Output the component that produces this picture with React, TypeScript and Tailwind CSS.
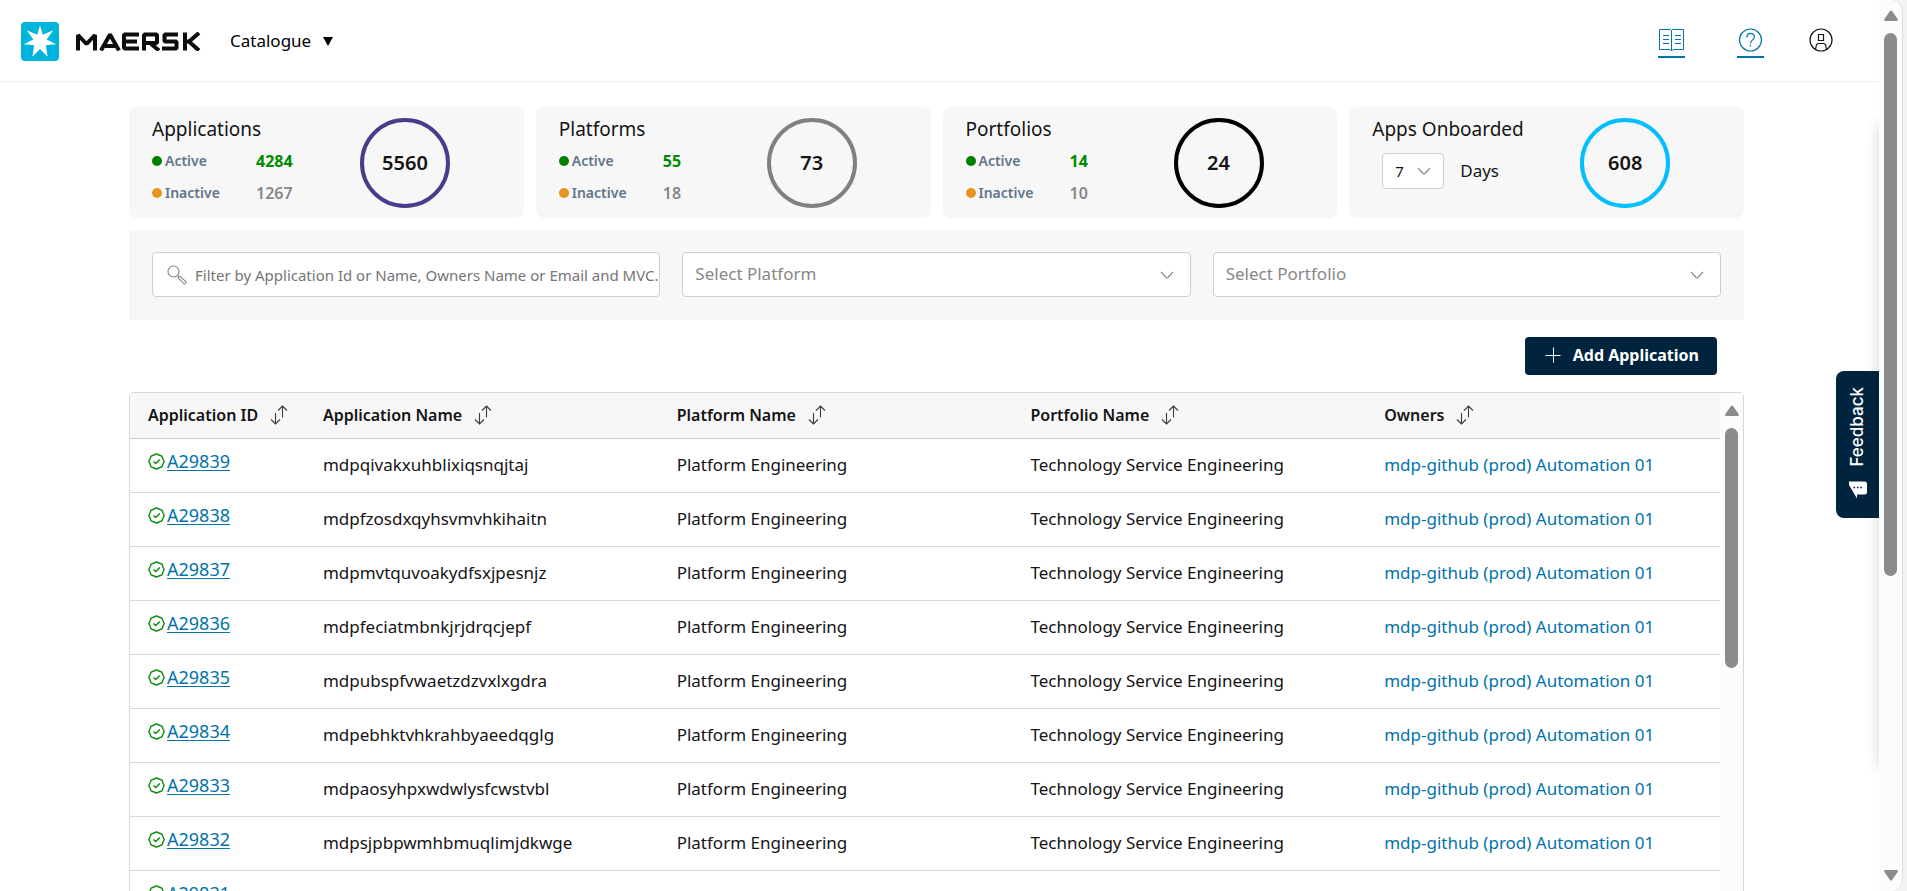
import React from 'react';

interface StatCardProps {
  title: string;
  total: number;
  ring: string;
  active: number;
  inactive: number;
}

interface AppRow {
  id: string;
  name: string;
}

const STATS: StatCardProps[] = [
  { title: 'Applications', total: 5560, ring: 'border-[#483d8b]', active: 4284, inactive: 1267 },
  { title: 'Platforms', total: 73, ring: 'border-[#808080]', active: 55, inactive: 18 },
  { title: 'Portfolios', total: 24, ring: 'border-black', active: 14, inactive: 10 },
];

const ROWS: AppRow[] = [
  { id: 'A29839', name: 'mdpqivakxuhblixiqsnqjtaj' },
  { id: 'A29838', name: 'mdpfzosdxqyhsvmvhkihaitn' },
  { id: 'A29837', name: 'mdpmvtquvoakydfsxjpesnjz' },
  { id: 'A29836', name: 'mdpfeciatmbnkjrjdrqcjepf' },
  { id: 'A29835', name: 'mdpubspfvwaetzdzvxlxgdra' },
  { id: 'A29834', name: 'mdpebhktvhkrahbyaeedqglg' },
  { id: 'A29833', name: 'mdpaosyhpxwdwlysfcwstvbl' },
  { id: 'A29832', name: 'mdpsjpbpwmhbmuqlimjdkwge' },
  { id: 'A29831', name: 'mdpxvukidtkxsrntevwdvuil' },
];

const COLUMNS = ['Application ID', 'Application Name', 'Platform Name', 'Portfolio Name', 'Owners'];

const Logo = () => (
  <a href="#" aria-label="Home" className="mt-0.5 flex items-center gap-4">
    <svg className="h-[39px] w-[38px] shrink-0" viewBox="0 0 38 39">
      <rect width="38" height="39" rx="4" fill="#00b5dd" />
      <path
        fill="#fff"
        d="M19 3.500L21.800 12.800L32.300 8.200L25.600 17.400L35.200 22.200L24.800 23.300L26.600 34.800L19 27L11.400 34.800L13.200 23.300L2.800 22.200L12.400 17.400L5.700 8.200L16.200 12.800Z"
      />
    </svg>
    <svg className="h-[19px] w-[126px] shrink-0" viewBox="0 0 126 19" role="img" aria-label="MAERSK">
      <g fill="none" stroke="#0d0d0d" strokeWidth="4" strokeLinejoin="bevel">
        <path d="M3 18.500V3L11.500 12L20 3V18.500" />
        <path d="M26 18.500L35 2.500L44 18.500M30 14H40" />
        <path d="M64 2.500H49V16.500H64M49 9.500H62" />
        <path d="M69 18.500V2.500H82V11H69M75 11L84 18.500" />
        <path d="M103 2.500H89.500V9.500H101.500V16.500H87" />
        <path d="M110 0.500V18.500M110 9.500H114L124 1M114 9.500L124 18.500" />
      </g>
    </svg>
  </a>
);

const BookIcon = () => (
  <svg className="h-6 w-[27px]" viewBox="0 0 27 24" fill="none" stroke="#0073ab" strokeWidth="1">
    <path d="M1.500 1.500H12.500L13.500 2.500L14.500 1.500H25.500V21.500H15L13.500 23L12 21.500H1.500ZM13.500 2.500V22.500" />
    <path d="M5 7.500H11M5 11.500H11M5 15.500H11M17 7.500H23M17 11.500H23M17 15.500H23" />
  </svg>
);

const HelpIcon = () => (
  <svg className="h-6 w-[27px]" viewBox="0 0 27 24" fill="none" stroke="#0073ab" strokeWidth="1.200">
    <circle cx="13.500" cy="12" r="11" />
    <path d="M9.800 9.500C9.800 3.800 17.400 4.300 17.400 8.800C17.400 12 13.500 11.800 13.500 15.500M13.500 17V18.500" />
  </svg>
);

const UserIcon = () => (
  <svg className="h-6 w-6" viewBox="0 0 24 24" fill="none" stroke="#141414" strokeWidth="1.200">
    <circle cx="12" cy="12" r="11" />
    <path d="M9.500 6.500H14.500V12.500H9.500ZM6.500 21.500L7.500 16.500L9 15.500H15L16.500 16.500L17.500 21.500" />
  </svg>
);

const SortIcon = () => (
  <svg className="h-5 w-[18px]" viewBox="0 0 18 20" fill="none" stroke="#3c3c3c" strokeWidth="1.100">
    <path d="M5.500 8V19M1 14.500L5.500 19L10 14.500M12.500 12.500V1M8 5.500L12.500 1L17 5.500" />
  </svg>
);

const VerifiedIcon = () => (
  <svg className="h-[17px] w-[17px] shrink-0" viewBox="0 0 17 17" fill="none" stroke="#088a08" strokeWidth="1.400">
    <path
      strokeLinejoin="round"
      d="M8.500 0.800L11 2L13.900 3.100L15 6L16.200 8.500L15 11L13.900 13.900L11 15L8.500 16.200L6 15L3.100 13.900L2 11L0.800 8.500L2 6L3.100 3.100L6 2Z"
    />
    <path d="M5.500 8.500L7.700 10.500L11.800 6.500" />
  </svg>
);

const SearchIcon = () => (
  <svg className="h-5 w-5 shrink-0" viewBox="0 0 20 20" fill="none" stroke="#878787" strokeWidth="1.100">
    <circle cx="6.500" cy="6.500" r="5.500" />
    <path d="M10.400 10.400L12 12M11.500 13.200C10.800 12.400 12.500 10.700 13.400 11.400L18.700 16.700C19.600 17.900 18 19.500 16.800 18.700Z" />
  </svg>
);

const ChevronDown = () => (
  <svg className="pointer-events-none h-2 w-3.5 shrink-0" viewBox="0 0 14 8" fill="none" stroke="#878787" strokeWidth="1.200">
    <path d="M1 0.800L6 6.500Q7 7.200 8 6.500L13 0.800" />
  </svg>
);

const ScrollArrow = ({ down = false }: { down?: boolean }) => (
  <svg className={down ? 'h-3 w-3.5 rotate-180' : 'h-3 w-3.5'} viewBox="0 0 14 12" fill="#8b8b8b">
    <path d="M7 0.500Q7.600 0.500 8 1L13.600 9Q14.200 11 13 11H1Q-0.200 11 0.400 9L6 1Q6.400 0.500 7 0.500Z" />
  </svg>
);

const Ring = ({ value, ring }: { value: number; ring: string }) => (
  <div className={`flex h-[90px] w-[90px] items-center justify-center rounded-full border-4 text-xl font-semibold ${ring}`}>
    {value}
  </div>
);

const StatCard: React.FC<StatCardProps> = ({ title, total, ring, active, inactive }) => (
  <section className="flex h-[111px] rounded-lg bg-[#f7f7f7] pl-[23px] pt-[11px]">
    <div className="w-[208px]">
      <h2 className="text-[19px] leading-[22px]">{title}</h2>
      <dl className="mt-[5px] grid grid-cols-[104px_1fr] leading-8">
        <dt className="flex items-center gap-[3px] text-sm font-semibold text-[#62748a]">
          <span className="h-2.5 w-2.5 rounded-full bg-[#008000]" />
          Active
        </dt>
        <dd className="text-base font-bold leading-8 text-[#008a00]">{active}</dd>
        <dt className="flex items-center gap-[3px] text-sm font-semibold text-[#62748a]">
          <span className="h-2.5 w-2.5 rounded-full bg-[#e99323]" />
          Inactive
        </dt>
        <dd className="text-base font-semibold leading-8 text-[#878787]">{inactive}</dd>
      </dl>
    </div>
    <Ring value={total} ring={ring} />
  </section>
);

const FilterSelect = ({ label }: { label: string }) => (
  <div className="relative flex h-[45px] items-center rounded border border-[#cfcfcf] bg-white pr-4">
    <select aria-label={label} className="h-full w-full appearance-none bg-transparent pb-0.5 pl-3 text-[17px] text-[#878787]">
      <option>{label}</option>
    </select>
    <ChevronDown />
  </div>
);

export default function App() {
  return (
    <div className="flex h-screen overflow-hidden bg-[#f3f3f3] pr-1 font-['Noto_Sans',sans-serif] text-[#141414]">
      <div className="relative min-w-0 flex-1 overflow-hidden bg-white">
        <header className="flex h-[82px] items-center border-b border-[#ededed] pl-[21px] pr-[46px]">
          <Logo />
          <button className="ml-[29px] flex items-center gap-3 text-[17px] text-black">
            Catalogue
            <svg className="mt-0.5 h-[9px] w-2.5" viewBox="0 0 10 9">
              <path d="M0 0H10L5 9Z" />
            </svg>
          </button>
          <nav className="ml-auto flex items-center">
            <a href="#docs" aria-label="Documentation" className="mt-1 border-b-2 border-[#0073ab] pb-1">
              <BookIcon />
            </a>
            <a href="#help" aria-label="Help" className="ml-[52px] mt-1 border-b-2 border-[#0073ab] pb-1">
              <HelpIcon />
            </a>
            <button aria-label="Account" className="mb-0.5 ml-[45px]">
              <UserIcon />
            </button>
          </nav>
        </header>

        <main className="pl-[129px] pr-[135px] pt-[25px]">
          <div className="grid grid-cols-4 gap-3">
            {STATS.map((stat) => (
              <StatCard key={stat.title} {...stat} />
            ))}
            <section className="flex h-[111px] rounded-lg bg-[#f7f7f7] pl-[23px] pt-[11px]">
              <div className="w-[208px]">
                <h2 className="text-[19px] leading-[22px]">Apps Onboarded</h2>
                <div className="mt-[13px] flex items-center gap-4 pl-2.5">
                  <div className="flex h-9 w-[62px] items-center rounded border border-[#cfcfcf] bg-white pr-3">
                    <select id="days" className="h-full w-full appearance-none bg-transparent pl-3 text-[15px]">
                      <option>7</option>
                    </select>
                    <ChevronDown />
                  </div>
                  <label htmlFor="days" className="text-[17px]">
                    Days
                  </label>
                </div>
              </div>
              <Ring value={608} ring="border-[#00bfff]" />
            </section>
          </div>

          {/* Filters */}
          <div className="mt-3 grid grid-cols-3 gap-[22px] bg-[#f7f7f7] px-[23px] pb-[23px] pt-[22px]">
            <label className="flex h-[45px] items-center gap-2 rounded border border-[#cfcfcf] bg-white pl-3.5">
              <SearchIcon />
              <input
                type="text"
                aria-label="Filter applications"
                placeholder="Filter by Application Id or Name, Owners Name or Email and MVC."
                className="h-full min-w-0 flex-1 text-[15px] outline-none placeholder:text-[#757575]"
              />
            </label>
            <FilterSelect label="Select Platform" />
            <FilterSelect label="Select Portfolio" />
          </div>

          <div className="flex justify-end pr-[27px] pt-[17px]">
            <button className="flex h-[38px] items-center gap-3 rounded bg-[#00243d] pb-0.5 pl-5 pr-[18px] text-base font-bold text-white">
              <svg className="h-4 w-4" viewBox="0 0 16 16" stroke="#fff" strokeWidth="1">
                <path d="M0.500 8.500H15.500M8.500 0.500V15.500" />
              </svg>
              Add Application
            </button>
          </div>

          {/* Applications table */}
          <div className="mt-[17px] flex rounded-t border border-[#d8d8d8]">
            <div className="min-w-0 flex-1">
              <table className="w-full table-fixed border-collapse text-left text-[17px]">
                <colgroup>
                  <col className="w-[11%]" />
                  <col />
                  <col />
                  <col />
                  <col />
                </colgroup>
                <thead>
                  <tr className="h-[45px] border-b border-[#cfcfcf] bg-[#f7f7f7]">
                    {COLUMNS.map((column) => (
                      <th key={column} className="pl-[18px] text-base font-semibold">
                        <button className="flex items-center gap-3 whitespace-nowrap">
                          {column}
                          <SortIcon />
                        </button>
                      </th>
                    ))}
                  </tr>
                </thead>
                <tbody>
                  {ROWS.map((row) => (
                    <tr key={row.id} className="h-[54px] border-b border-[#d8d8d8]">
                      <td className="pb-2 pl-[18px]">
                        <div className="flex items-center gap-0.5">
                          <VerifiedIcon />
                          <a href={`#${row.id}`} className="text-lg text-[#0073ab] underline underline-offset-2">
                            {row.id}
                          </a>
                        </div>
                      </td>
                      <td className="pl-[18px]">{row.name}</td>
                      <td className="pl-[18px]">Platform Engineering</td>
                      <td className="pl-[18px]">Technology Service Engineering</td>
                      <td className="pl-[18px]">
                        <a href="#owner" className="text-[#0073ab]">
                          mdp-github (prod) Automation 01
                        </a>
                      </td>
                    </tr>
                  ))}
                </tbody>
              </table>
            </div>
            <div className="flex w-[23px] flex-col items-center bg-[#fcfcfc] pt-3">
              <ScrollArrow />
              <div className="mt-[11px] h-60 w-[13px] rounded-full bg-[#8b8b8b]" />
            </div>
          </div>
        </main>

        {/* Collapsed drawer edge */}
        <div className="absolute -right-2 top-[124px] h-[642px] w-2 shadow-[0_0_14px_rgba(0,0,0,0.2)]" />

        <button className="absolute right-0 top-[371px] flex h-[147px] w-[43px] flex-col items-center justify-end gap-3.5 rounded-l-lg bg-[#00243d] pb-[19px] text-white">
          <span className="rotate-180 font-['Inter',sans-serif] text-[17px] font-medium [writing-mode:vertical-rl]">Feedback</span>
          <svg className="h-[18px] w-[18px]" viewBox="0 0 18 18">
            <path fill="#fff" d="M0 0.500H15.500Q18 0.500 18 3V11Q18 13.500 15.500 13.500H8V17.500L0 4Z" />
            <path stroke="#00243d" strokeWidth="1.600" strokeDasharray="1.600 1.800" d="M4.500 6.500H13.500" />
          </svg>
        </button>
      </div>

      <div className="flex w-6 flex-col items-center rounded-r-xl border-r border-[#dedede] bg-[#fcfcfc] pt-2.5 pb-2.5">
        <ScrollArrow />
        <div className="mt-[11px] h-[543px] w-[13px] rounded-full bg-[#8b8b8b]" />
        <div className="mt-auto">
          <ScrollArrow down />
        </div>
      </div>
    </div>
  );
}
